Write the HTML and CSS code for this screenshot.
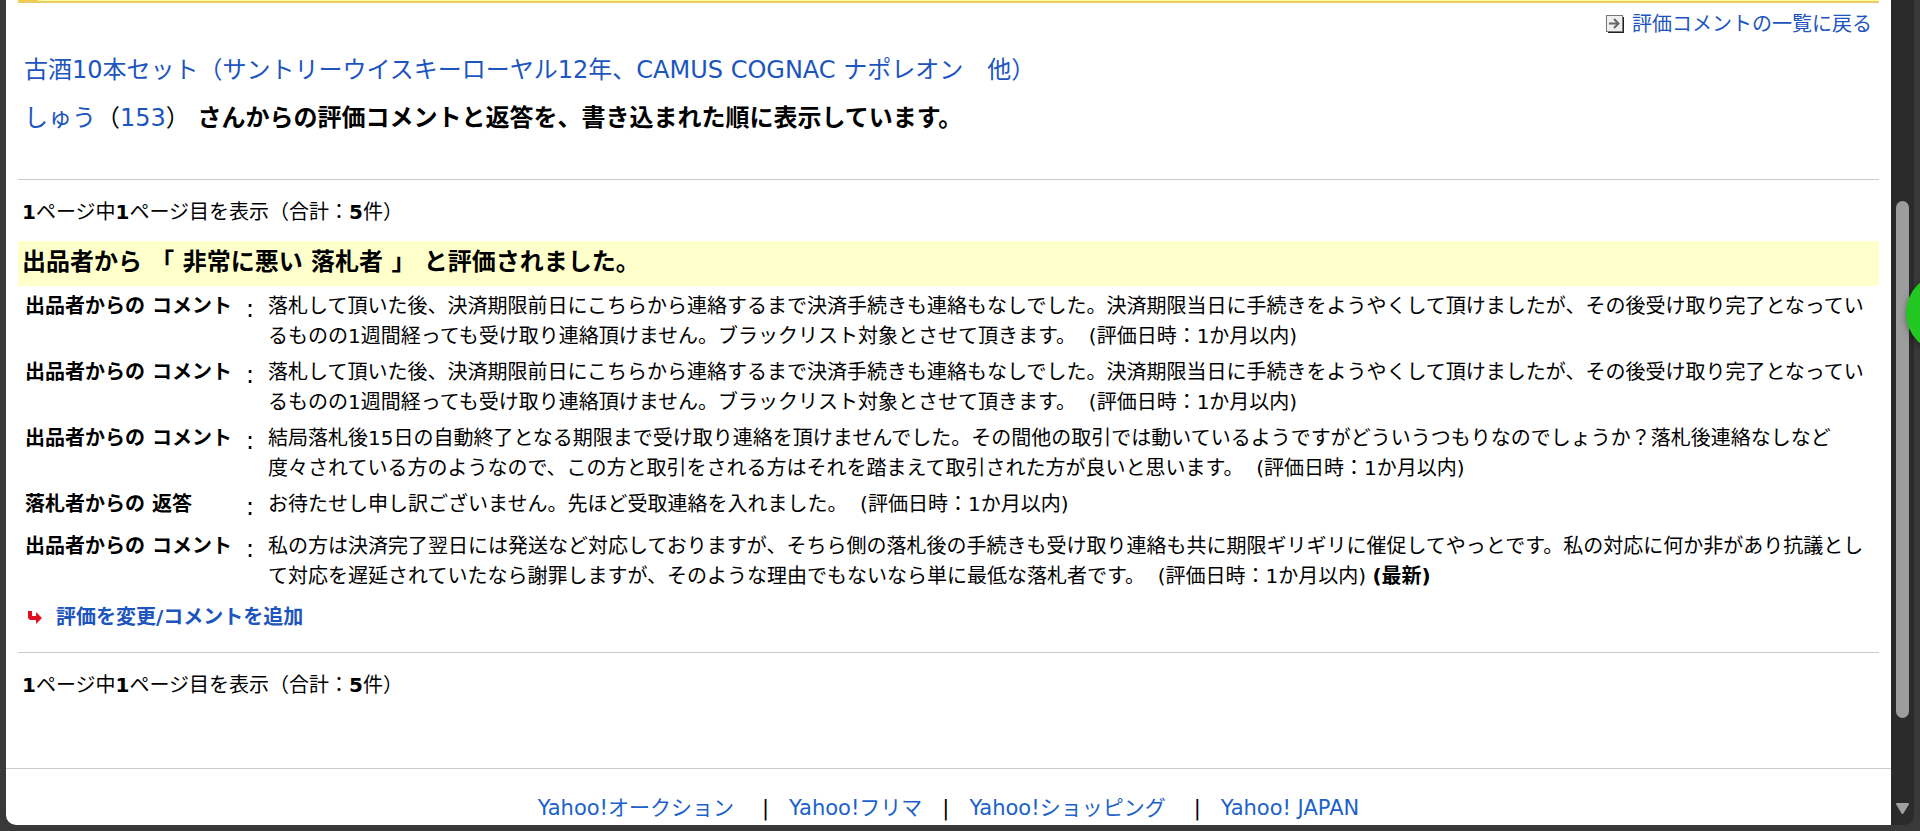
FILE: index.html
```html
<!DOCTYPE html>
<html lang="ja">
<head>
  <meta charset="UTF-8">
  <meta name="viewport" content="width=device-width, initial-scale=1.0">
  <title>評価コメント</title>
  <link rel="stylesheet" href="styles.css">
</head>
<body>
  <div class="page">
    <div class="content">
      <div class="tab-line"></div>

      <div class="back">
        <svg width="18" height="18" viewBox="0 0 18 18">
          <rect x="2" y="2" width="16" height="16" fill="#222"/>
          <rect x="0.5" y="0.5" width="16" height="16" fill="#f0f0f0" stroke="#777"/>
          <path d="M3 8.500h10M8 4l4.500 4.500L8 13" fill="none" stroke="#666" stroke-width="2"/>
        </svg>
        <a href="#">評価コメントの一覧に戻る</a>
      </div>

      <div class="title">
        <p><a href="#">古酒10本セット（サントリーウイスキーローヤル12年、CAMUS COGNAC ナポレオン　他）</a></p>
        <p><a href="#">しゅう</a>（<a href="#">153</a>） <b>さんからの評価コメントと返答を、書き込まれた順に表示しています。</b></p>
      </div>

      <p class="pager"><b>1</b>ページ中<b>1</b>ページ目を表示（合計：<b>5</b>件）</p>

      <h2>出品者から 「 非常に悪い 落札者 」 と評価されました。</h2>

      <table class="comments">
        <tr>
          <th>出品者からの コメント</th>
          <td class="colon">:</td>
          <td>落札して頂いた後、決済期限前日にこちらから連絡するまで決済手続きも連絡もなしでした。決済期限当日に手続きをようやくして頂けましたが、その後受け取り完了となっているものの1週間経っても受け取り連絡頂けません。ブラックリスト対象とさせて頂きます。 &nbsp;(評価日時：1か月以内)</td>
        </tr>
        <tr>
          <th>出品者からの コメント</th>
          <td class="colon">:</td>
          <td>落札して頂いた後、決済期限前日にこちらから連絡するまで決済手続きも連絡もなしでした。決済期限当日に手続きをようやくして頂けましたが、その後受け取り完了となっているものの1週間経っても受け取り連絡頂けません。ブラックリスト対象とさせて頂きます。 &nbsp;(評価日時：1か月以内)</td>
        </tr>
        <tr>
          <th>出品者からの コメント</th>
          <td class="colon">:</td>
          <td>結局落札後15日の自動終了となる期限まで受け取り連絡を頂けませんでした。その間他の取引では動いているようですがどういうつもりなのでしょうか？落札後連絡なしなど度々されている方のようなので、この方と取引をされる方はそれを踏まえて取引された方が良いと思います。 &nbsp;(評価日時：1か月以内)</td>
        </tr>
        <tr>
          <th>落札者からの 返答</th>
          <td class="colon">:</td>
          <td>お待たせし申し訳ございません。先ほど受取連絡を入れました。 &nbsp;(評価日時：1か月以内)</td>
        </tr>
        <tr>
          <th>出品者からの コメント</th>
          <td class="colon">:</td>
          <td>私の方は決済完了翌日には発送など対応しておりますが、そちら側の落札後の手続きも受け取り連絡も共に期限ギリギリに催促してやっとです。私の対応に何か非があり抗議として対応を遅延されていたなら謝罪しますが、そのような理由でもないなら単に最低な落札者です。 &nbsp;(評価日時：1か月以内) <b>(最新)</b></td>
        </tr>
      </table>

      <div class="add">
        <svg width="18" height="16" viewBox="0 0 18 16">
          <path d="M2 2h4v5h4V3l6 6-6 6v-4H4l-2-2z" fill="#e01020"/>
        </svg>
        <a href="#">評価を変更/コメントを追加</a>
      </div>

      <p class="pager bottom"><b>1</b>ページ中<b>1</b>ページ目を表示（合計：<b>5</b>件）</p>
    </div>

    <div class="footer">
      <a class="wide" href="#">Yahoo!オークション</a><span>|</span><a href="#">Yahoo!フリマ</a><span>|</span><a class="wide" href="#">Yahoo!ショッピング</a><span>|</span><a href="#">Yahoo! JAPAN</a>
    </div>
  </div>

  <div class="scrollbar">
    <div class="thumb"></div>
    <svg class="arrow" width="15" height="12" viewBox="0 0 15 12">
      <path d="M2 1h11l-5.500 9z" fill="#a0a0a0" stroke="#a0a0a0" stroke-width="2" stroke-linejoin="round"/>
    </svg>
  </div>
  <div class="bubble"></div>
</body>
</html>
```
FILE: styles.css
```css
* { box-sizing: border-box; }
html, body {
  margin: 0;
  height: 100%;
}
body {
  display: flex;
  padding: 0 6px 6px;
  overflow: hidden;
  background: #393939;
  color: #000;
  font-family: "DejaVu Sans", "Noto Sans CJK JP", sans-serif;
  font-size: 20px;
  line-height: 30px;
  text-spacing-trim: space-all;
}
p, h2 { margin: 0; }
a {
  color: #1d55be;
  text-decoration: none;
}
.page {
  flex: 1;
  background: #fff;
  border-bottom-left-radius: 10px;
}
.content {
  padding: 0 12px;
}
.tab-line {
  height: 3px;
  background: linear-gradient(90deg, #f8c840 20px, transparent 20px), #ffff99;
  border-bottom: 2px solid #e9cb68;
}
.back {
  display: flex;
  justify-content: flex-end;
  align-items: center;
  gap: 8px;
  padding: 6px 7px 0 0;
}
.title {
  padding: 7px 6px 37px;
  border-bottom: 1px solid #ccc;
  font-size: 24px;
  line-height: 48px;
}
.pager {
  padding: 17px 4px 14px;
}
h2 {
  padding: 6px 4px 9px;
  background: #ffffcc;
  font-size: 24px;
  line-height: 30px;
}
.comments {
  width: 100%;
  margin-top: 2px;
  border-collapse: collapse;
}
.comments th, .comments td {
  padding: 3px 9px 3px 7px;
  vertical-align: top;
  text-align: left;
}
.comments th {
  width: 228px;
  white-space: nowrap;
}
.comments .colon {
  width: 15px;
  padding: 3px 0;
  font-size: 24px;
  line-height: 36px;
}
.add {
  display: flex;
  align-items: center;
  gap: 12px;
  padding: 8px 8px 20px;
  border-bottom: 1px solid #ccc;
  font-weight: bold;
}
.bottom {
  padding-bottom: 68px;
}
.footer {
  display: flex;
  justify-content: center;
  gap: 20px;
  padding: 24px 0 4px;
  border-top: 1px solid #ccc;
  font-size: 21px;
}
.footer a { color: #1b62c9; }
.footer .wide { margin-right: 8px; }
.scrollbar {
  width: 23px;
  padding: 201px 5px 0;
  background: #2b2b2b;
  border-bottom-right-radius: 10px;
}
.thumb {
  width: 13px;
  height: 517px;
  border-radius: 7px;
  background: #9d9d9d;
}
.arrow {
  display: block;
  margin: 85px 0 0 -1px;
}
.bubble {
  position: absolute;
  top: 273px;
  right: -66px;
  width: 80px;
  height: 80px;
  border-radius: 50%;
  background: #22c722;
  box-shadow: 0 2px 6px rgba(0, 0, 0, 0.4);
}
```
